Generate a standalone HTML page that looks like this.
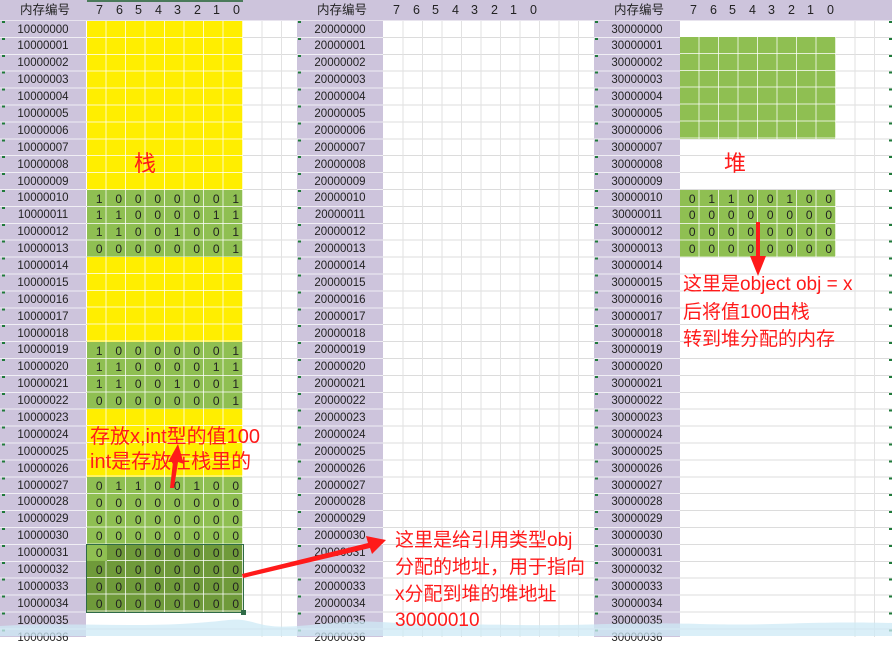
<!DOCTYPE html>
<html><head><meta charset="utf-8"><style>
*{box-sizing:border-box}
body{margin:0;width:892px;height:636px;overflow:hidden;position:relative;background:#fff;font-family:"Liberation Sans","Noto Sans CJK SC",sans-serif;font-size:12px;color:#222}
.abs{position:absolute}
.hl{left:0;top:20.5px;width:892px;height:616px;background:repeating-linear-gradient(to bottom,transparent 0 15.9px,#dcdcdc 15.9px 16.9px)}
.hdr{left:0;top:0;width:892px;height:20.5px;background:#cdc4dc;border-bottom:1px solid #e8e4ee}
.hdr span{position:absolute;top:2px;font-size:12.5px;line-height:16px}
.lab{top:20.5px;width:86px;height:616px;background:#cdc4dc repeating-linear-gradient(to bottom,transparent 0 15.9px,#f0eef4 15.9px 16.9px)}
.lab div{height:16.9px;line-height:18px;text-align:center;font-size:11.5px}
.tri{top:20.5px;width:3px;height:616px;background:repeating-linear-gradient(to bottom,#1f7a3a 0 2px,transparent 2px 16.9px)}
.c{background-image:repeating-linear-gradient(to right,transparent 0 18.5px,rgba(255,255,255,.75) 18.5px 19.5px),repeating-linear-gradient(to bottom,transparent 0 15.9px,rgba(255,255,255,.75) 15.9px 16.9px);width:156px}
.y{background-color:#ffee00}.g{background-color:#8fbf52}.d{background-color:#6f9a3a}
.vg{width:156px;top:20.5px;height:616px;background:repeating-linear-gradient(to right,transparent 0 18.5px,#e2e2e2 18.5px 19.5px)}
.r{display:flex;height:16.9px;line-height:18px;width:156px}
.r span{width:19.5px;text-align:right;padding-right:4px;font-size:12px}
.red{color:#ff1a1a;white-space:nowrap}
</style></head><body>
<div class="abs hl"></div>
<div class="abs vg" style="left:384px"></div>
<div class="abs vg" style="left:243px;width:54px"></div>
<div class="abs vg" style="left:540px;width:54px"></div>
<div class="abs vg" style="left:836px;width:56px"></div>
<div class="abs hdr">
<span style="left:20px">内存编号</span>
<span style="left:96px">7</span><span style="left:116px">6</span><span style="left:135px">5</span><span style="left:155px">4</span><span style="left:174px">3</span><span style="left:194px">2</span><span style="left:213px">1</span><span style="left:233px">0</span>
<span style="left:317px">内存编号</span>
<span style="left:393px">7</span><span style="left:413px">6</span><span style="left:432px">5</span><span style="left:452px">4</span><span style="left:471px">3</span><span style="left:491px">2</span><span style="left:510px">1</span><span style="left:530px">0</span>
<span style="left:614px">内存编号</span>
<span style="left:690px">7</span><span style="left:710px">6</span><span style="left:729px">5</span><span style="left:749px">4</span><span style="left:768px">3</span><span style="left:788px">2</span><span style="left:807px">1</span><span style="left:827px">0</span>
</div>
<div class="abs" style="left:87px;top:0;width:156px;height:2px;background:#4a7a5a"></div>

<div class="abs lab" style="left:0">
<div>10000000</div><div>10000001</div><div>10000002</div><div>10000003</div><div>10000004</div><div>10000005</div><div>10000006</div><div>10000007</div><div>10000008</div><div>10000009</div><div>10000010</div><div>10000011</div><div>10000012</div><div>10000013</div><div>10000014</div><div>10000015</div><div>10000016</div><div>10000017</div><div>10000018</div><div>10000019</div><div>10000020</div><div>10000021</div><div>10000022</div><div>10000023</div><div>10000024</div><div>10000025</div><div>10000026</div><div>10000027</div><div>10000028</div><div>10000029</div><div>10000030</div><div>10000031</div><div>10000032</div><div>10000033</div><div>10000034</div><div>10000035</div><div>10000036</div>
</div>
<div class="abs lab" style="left:297px">
<div>20000000</div><div>20000001</div><div>20000002</div><div>20000003</div><div>20000004</div><div>20000005</div><div>20000006</div><div>20000007</div><div>20000008</div><div>20000009</div><div>20000010</div><div>20000011</div><div>20000012</div><div>20000013</div><div>20000014</div><div>20000015</div><div>20000016</div><div>20000017</div><div>20000018</div><div>20000019</div><div>20000020</div><div>20000021</div><div>20000022</div><div>20000023</div><div>20000024</div><div>20000025</div><div>20000026</div><div>20000027</div><div>20000028</div><div>20000029</div><div>20000030</div><div>20000031</div><div>20000032</div><div>20000033</div><div>20000034</div><div>20000035</div><div>20000036</div>
</div>
<div class="abs lab" style="left:594px">
<div>30000000</div><div>30000001</div><div>30000002</div><div>30000003</div><div>30000004</div><div>30000005</div><div>30000006</div><div>30000007</div><div>30000008</div><div>30000009</div><div>30000010</div><div>30000011</div><div>30000012</div><div>30000013</div><div>30000014</div><div>30000015</div><div>30000016</div><div>30000017</div><div>30000018</div><div>30000019</div><div>30000020</div><div>30000021</div><div>30000022</div><div>30000023</div><div>30000024</div><div>30000025</div><div>30000026</div><div>30000027</div><div>30000028</div><div>30000029</div><div>30000030</div><div>30000031</div><div>30000032</div><div>30000033</div><div>30000034</div><div>30000035</div><div>30000036</div>
</div>
<div class="abs tri" style="left:2px"></div>
<div class="abs tri" style="left:298px"></div>
<div class="abs tri" style="left:595px"></div>
<div class="abs tri" style="left:889px"></div>

<div class="abs c y" style="left:87px;top:20.5px;height:169px"></div>
<div class="abs c g" style="left:87px;top:189.5px;height:67.6px"></div>
<div class="abs c y" style="left:87px;top:257.1px;height:84.5px"></div>
<div class="abs c g" style="left:87px;top:341.6px;height:67.6px"></div>
<div class="abs c y" style="left:87px;top:409.2px;height:67.6px"></div>
<div class="abs c g" style="left:87px;top:476.8px;height:67.6px"></div>
<div class="abs c d" style="left:87px;top:544.4px;height:67.6px"></div>
<div class="abs" style="left:87px;top:544.4px;width:19.5px;height:16.9px;background:#8fbf52"></div>
<div class="abs" style="left:86px;top:543.5px;width:158px;height:69.5px;border:1.5px solid #2f6b47"></div>
<div class="abs" style="left:241px;top:610px;width:5px;height:5px;background:#2f6b47"></div>

<div class="abs c g" style="left:680px;top:37.4px;height:101.4px"></div>
<div class="abs c g" style="left:680px;top:189.5px;height:67.6px"></div>

<div class="abs" style="left:87px;top:189.5px">
<div class="r"><span>1</span><span>0</span><span>0</span><span>0</span><span>0</span><span>0</span><span>0</span><span>1</span></div>
<div class="r"><span>1</span><span>1</span><span>0</span><span>0</span><span>0</span><span>0</span><span>1</span><span>1</span></div>
<div class="r"><span>1</span><span>1</span><span>0</span><span>0</span><span>1</span><span>0</span><span>0</span><span>1</span></div>
<div class="r"><span>0</span><span>0</span><span>0</span><span>0</span><span>0</span><span>0</span><span>0</span><span>1</span></div>
</div>
<div class="abs" style="left:87px;top:341.6px">
<div class="r"><span>1</span><span>0</span><span>0</span><span>0</span><span>0</span><span>0</span><span>0</span><span>1</span></div>
<div class="r"><span>1</span><span>1</span><span>0</span><span>0</span><span>0</span><span>0</span><span>1</span><span>1</span></div>
<div class="r"><span>1</span><span>1</span><span>0</span><span>0</span><span>1</span><span>0</span><span>0</span><span>1</span></div>
<div class="r"><span>0</span><span>0</span><span>0</span><span>0</span><span>0</span><span>0</span><span>0</span><span>1</span></div>
</div>
<div class="abs" style="left:87px;top:476.8px">
<div class="r"><span>0</span><span>1</span><span>1</span><span>0</span><span>0</span><span>1</span><span>0</span><span>0</span></div>
<div class="r"><span>0</span><span>0</span><span>0</span><span>0</span><span>0</span><span>0</span><span>0</span><span>0</span></div>
<div class="r"><span>0</span><span>0</span><span>0</span><span>0</span><span>0</span><span>0</span><span>0</span><span>0</span></div>
<div class="r"><span>0</span><span>0</span><span>0</span><span>0</span><span>0</span><span>0</span><span>0</span><span>0</span></div>
<div class="r"><span>0</span><span>0</span><span>0</span><span>0</span><span>0</span><span>0</span><span>0</span><span>0</span></div>
<div class="r"><span>0</span><span>0</span><span>0</span><span>0</span><span>0</span><span>0</span><span>0</span><span>0</span></div>
<div class="r"><span>0</span><span>0</span><span>0</span><span>0</span><span>0</span><span>0</span><span>0</span><span>0</span></div>
<div class="r"><span>0</span><span>0</span><span>0</span><span>0</span><span>0</span><span>0</span><span>0</span><span>0</span></div>
</div>
<div class="abs" style="left:680px;top:189.5px">
<div class="r"><span>0</span><span>1</span><span>1</span><span>0</span><span>0</span><span>1</span><span>0</span><span>0</span></div>
<div class="r"><span>0</span><span>0</span><span>0</span><span>0</span><span>0</span><span>0</span><span>0</span><span>0</span></div>
<div class="r"><span>0</span><span>0</span><span>0</span><span>0</span><span>0</span><span>0</span><span>0</span><span>0</span></div>
<div class="r"><span>0</span><span>0</span><span>0</span><span>0</span><span>0</span><span>0</span><span>0</span><span>0</span></div>
</div>

<svg class="abs" style="left:0;top:600px" width="892" height="36"><path d="M0 26 C60 22 120 27 180 24 S230 16 260 24 S330 19 380 22 S450 24 520 25 S620 22 700 24 S800 21 892 23 L892 36 L0 36Z" fill="#cdeaf5" opacity=".75"/></svg>

<div class="abs red" style="left:134px;top:146px;font-size:22px">栈</div>
<div class="abs red" style="left:724px;top:146px;font-size:22px">堆</div>
<div class="abs red" style="left:90px;top:425px;font-size:20px;line-height:25px">存放x,int型的值100<br>int是存放在栈里的</div>
<div class="abs red" style="left:683px;top:271px;font-size:19px;line-height:27.5px">这里是object obj = x<br>后将值100由栈<br>转到堆分配的内存</div>
<div class="abs red" style="left:395px;top:528px;font-size:19px;line-height:26.8px">这里是给引用类型obj<br>分配的地址，用于指向<br>x分配到堆的堆地址<br>30000010</div>

<svg class="abs" style="left:0;top:0" width="892" height="636">
<g fill="#ff1a1a" stroke="none">
<polygon points="242,574 243,578 370,548 372,554 386,540 366,536 368,543"/>
<polygon points="170,488 174,488 178,462 184,464 178,444 168,462 173,462"/>
<polygon points="756,222 760,222 760,256 766,256 758,276 750,256 756,256"/>
</g>
</svg>
</body></html>
